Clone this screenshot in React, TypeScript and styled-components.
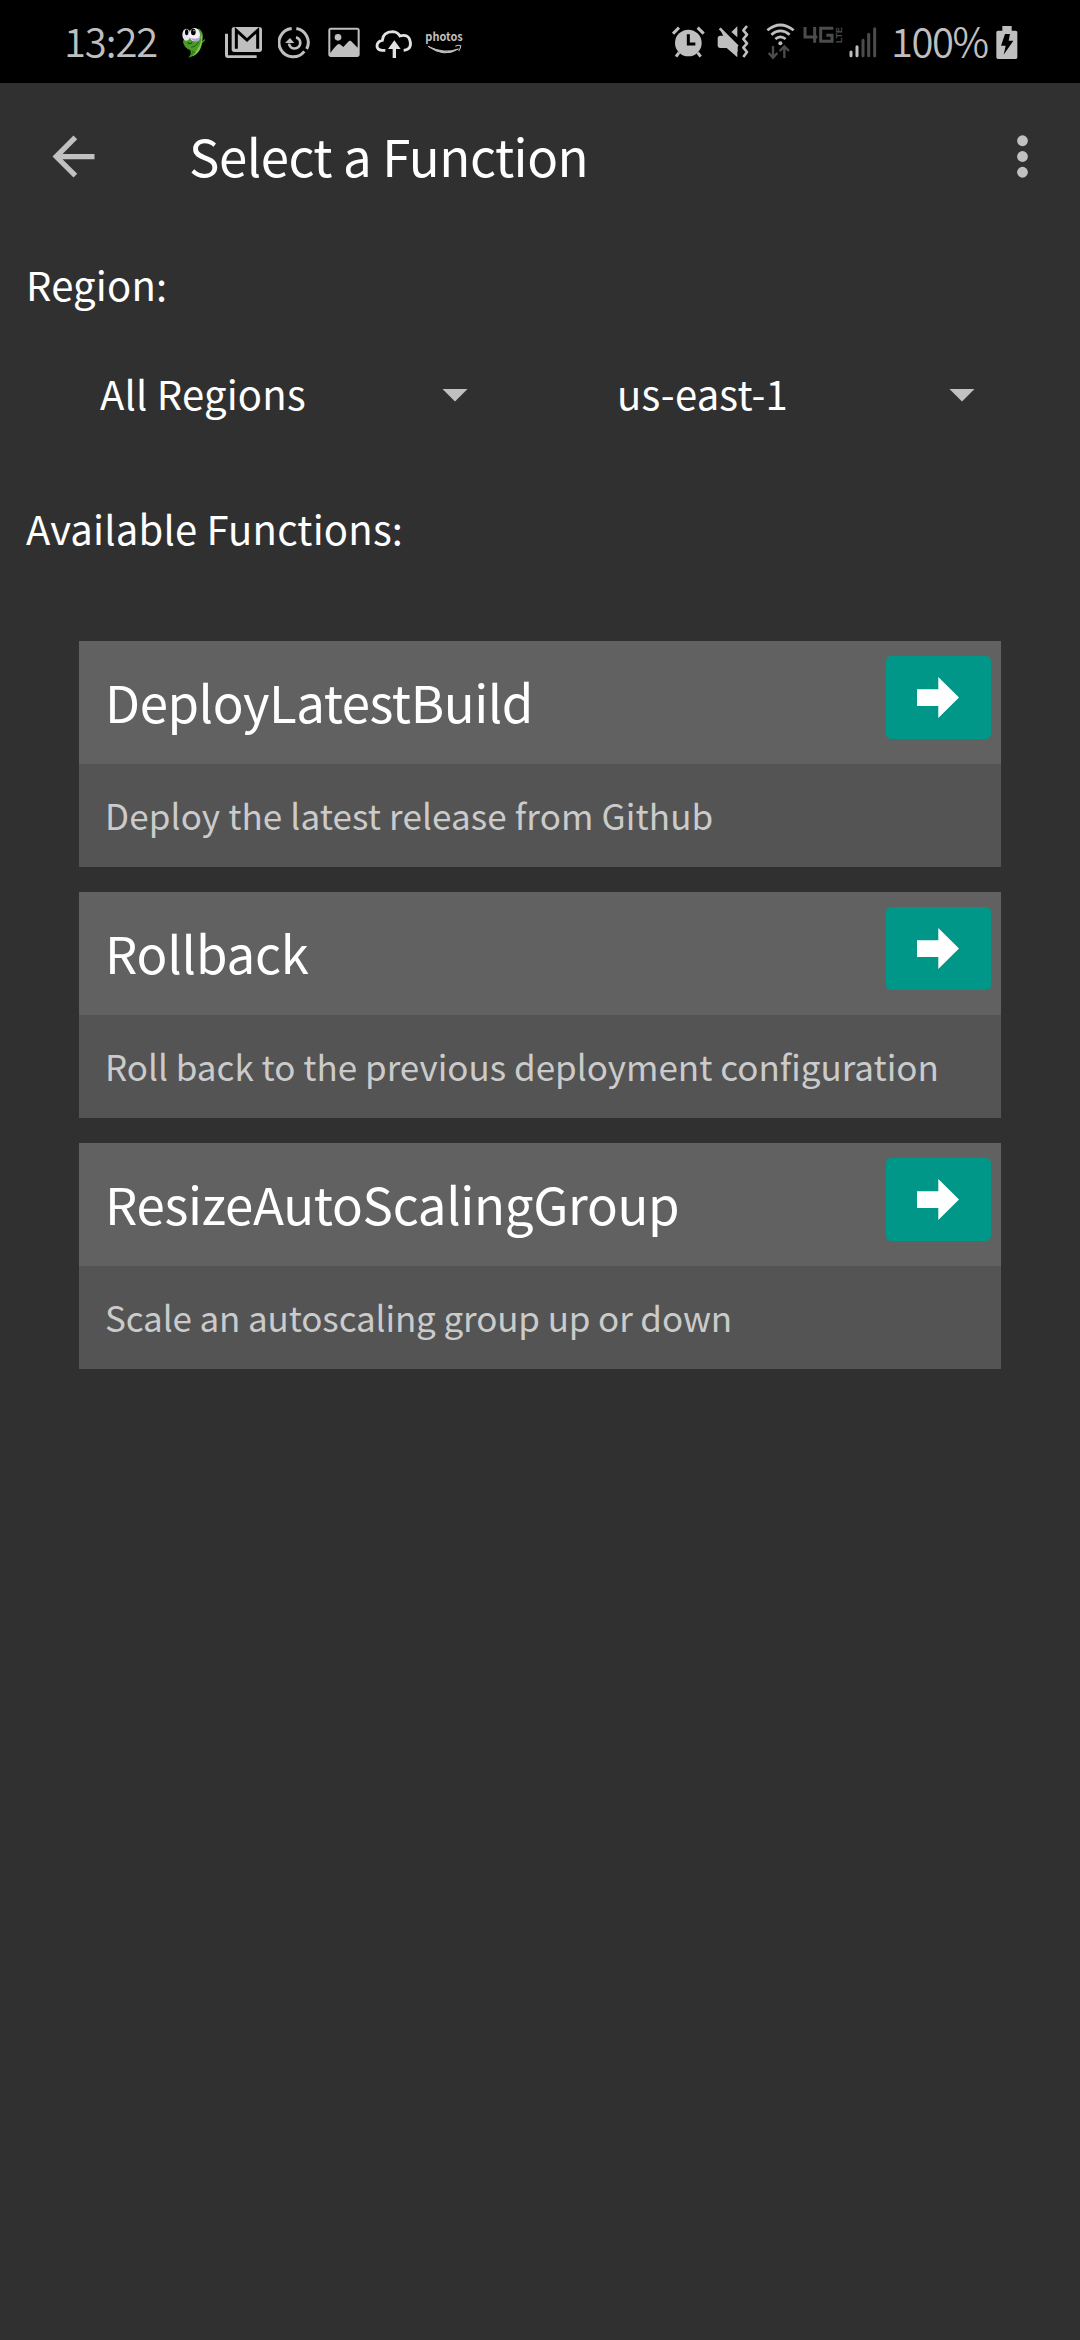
import React from "react";
import styled, { createGlobalStyle } from "styled-components";

const GlobalStyle = createGlobalStyle`
  *, *::before, *::after { box-sizing: border-box; }
  html, body { margin: 0; padding: 0; background: #303030; }
  body { font-family: "Noto Sans CJK SC", "Noto Sans", sans-serif; color: #ffffff; }
`;

const Screen = styled.div`
  width: 1080px;
  height: 2340px;
  display: flex;
  flex-direction: column;
  background: #303030;
  overflow: hidden;
`;

const StatusBar = styled.header`
  height: 83px;
  flex: none;
  display: flex;
  justify-content: space-between;
  padding: 10px 62px 0 64px;
  background: #000000;
  color: #bfbfbf;
`;

const StatusGroup = styled.div`
  display: flex;
  height: 70px;
`;

const StatusText = styled.span<{ $width: number; $inset: number; $spacing: number }>`
  width: ${(p) => p.$width}px;
  padding-left: ${(p) => p.$inset}px;
  flex: none;
  font-size: 40px;
  font-weight: 350;
  line-height: 61px;
  letter-spacing: ${(p) => p.$spacing}px;
  white-space: nowrap;
`;

const Glyph = styled.svg<{ $gap: number }>`
  display: block;
  flex: none;
  height: 70px;
  margin-left: ${(p) => p.$gap}px;
`;

const Toolbar = styled.nav`
  height: 147px;
  flex: none;
  display: flex;
  align-items: center;
  padding: 0 26px 0 42px;
`;

const IconButton = styled.button`
  width: 63px;
  height: 63px;
  padding: 0;
  border: 0;
  background: none;
  color: #c1c1c1;
  svg { display: block; width: 63px; height: 63px; fill: currentColor; }
`;

const Label = styled.span`
  display: block;
  padding-bottom: 4px;
  font-size: 40px;
  letter-spacing: 0.2px;
  line-height: 56px;
  white-space: nowrap;
`;

const Title = styled.h1`
  flex: 1;
  margin: 0 0 0 84px;
  padding-bottom: 4px;
  font-size: 51px;
  font-weight: 400;
  line-height: 70px;
  letter-spacing: -0.5px;
  white-space: nowrap;
`;

const SectionLabel = styled.div<{ $top: number }>`
  margin-top: ${(p) => p.$top}px;
  padding-left: 26px;
`;

const SpinnerRow = styled.div`
  display: flex;
  margin-top: 49px;
  padding-left: 100px;
`;

const Spinner = styled.div<{ $width: number; $next: number }>`
  width: ${(p) => p.$width}px;
  margin-right: ${(p) => p.$next}px;
  display: flex;
  align-items: center;
  justify-content: space-between;
`;

const Caret = styled.i`
  width: 26px;
  height: 13px;
  background: #c1c1c1;
  clip-path: polygon(0 0, 100% 0, 50% 100%);
`;

const List = styled.main`
  display: flex;
  flex-direction: column;
  gap: 25px;
  margin: 81px 79px 0;
`;

const Card = styled.section`
  background: #545454;
`;

const CardHeader = styled.div`
  height: 123px;
  display: flex;
  justify-content: space-between;
  align-items: flex-start;
  padding: 15px 10px 0 26px;
  background: #616161;
`;

const CardTitle = styled.h2<{ $spacing: number }>`
  margin: 10px 0 0;
  font-size: 51px;
  font-weight: 400;
  line-height: 70px;
  letter-spacing: ${(p) => p.$spacing}px;
  white-space: nowrap;
`;

const RunButton = styled.button`
  width: 105px;
  height: 83px;
  padding: 0;
  border: 0;
  border-radius: 5px;
  background: #009688;
  svg { display: block; }
`;

const CardText = styled.p<{ $spacing: number }>`
  height: 103px;
  margin: 0;
  padding: 21px 0 0 26px;
  color: #cbcbcb;
  font-size: 35px;
  line-height: 60px;
  letter-spacing: ${(p) => p.$spacing}px;
  white-space: nowrap;
`;

const functions = [
  { name: "DeployLatestBuild", nameSpacing: -0.45, text: "Deploy the latest release from Github", textSpacing: 0.13 },
  { name: "Rollback", nameSpacing: -0.2, text: "Roll back to the previous deployment configuration", textSpacing: 0 },
  { name: "ResizeAutoScalingGroup", nameSpacing: -0.33, text: "Scale an autoscaling group up or down", textSpacing: -0.12 },
];

const grey = "#bfbfbf";
const dim = "#4c4c4c";

const Worm = () => (
  <Glyph $gap={0} width={28} viewBox="390 0 84 210">
    <path d="M447 56C460 66 461 78 456 94L466 86L464 92L456 100C452 124 440 138 415 143Q426 132 421 121Q400 112 399 94L420 60Z" fill="#4b9a28" />
    <path d="M450 66Q460 92 442 118Q434 134 424 139Q448 132 454 106Q461 82 450 66Z" fill="#83c94b" />
    <path d="M424 112Q436 112 446 96M426 124l8 4M421 134l8-3" stroke="#22610f" strokeWidth="3" fill="none" />
    <ellipse cx="409" cy="74" rx="12" ry="18" fill="#e9e4f4" />
    <ellipse cx="434" cy="74" rx="16" ry="20" fill="#f4f0fb" />
    <path d="M422 84q6 12 20 10q10-4 10-16q-8 12-30 6Z" fill="#b5a6d2" />
    <ellipse cx="410" cy="67" rx="5" ry="9" fill="#000" />
    <ellipse cx="430" cy="66" rx="7" ry="10" fill="#000" />
    <circle cx="432" cy="62" r="2" fill="#fff" />
    <path d="M412 98q8 7 15-1" stroke="#123c08" strokeWidth="3" fill="none" />
  </Glyph>
);

const Mail = () => (
  <Glyph $gap={17} width={38} viewBox="525 0 114 210">
    <path d="M525 71h9v65h86v8h-86q-9 0-9-9Z" fill={grey} />
    <rect x="545" y="51" width="91" height="75" rx="8" fill={grey} />
    <path d="M559 116V61L591 90L623 61V116" stroke="#000" strokeWidth="9" fill="none" />
  </Glyph>
);

const Sync = () => (
  <Glyph $gap={15} width={33} viewBox="54 0 99 210">
    <path d="M95 55.500A42.500 42.500 0 1 0 133 124" stroke={grey} strokeWidth="9" fill="none" />
    <path d="M109 55.500A42.500 42.500 0 0 1 140 117" stroke={grey} strokeWidth="9" fill="none" />
    <path d="M108 82A17 17 0 1 1 87 101" stroke={grey} strokeWidth="8" fill="none" />
    <path d="M75 99L90 84L103 99Z" fill={grey} />
  </Glyph>
);

const Picture = () => (
  <Glyph $gap={17} width={32} viewBox="204 0 96 210">
    <path
      d="M213 53H291Q299 53 299 61V133Q299 141 291 141H213Q205 141 205 133V61Q205 53 213 53ZM211 59V129L217 121Q222 114 228 108Q235 99 242 104L250 111L264 96Q270 89 276 96L293 113V59Z"
      fill={grey}
      fillRule="evenodd"
    />
    <circle cx="234" cy="82" r="10" fill={grey} />
  </Glyph>
);

const CloudUpload = () => (
  <Glyph $gap={15} width={38} viewBox="344 0 114 210">
    <path d="M375 121H365Q350 119 350 107Q351 94 366 91Q368 66 397 65Q412 66 419 78Q444 71 449 92Q456 118 430 121" stroke="#e2e2e2" strokeWidth="8.500" fill="none" />
    <path d="M402 91L421 117H407V144H397V117H383Z" fill="#e2e2e2" />
  </Glyph>
);

const Photos = () => (
  <Glyph $gap={12} width={39} viewBox="494 0 117 210">
    <text x="495" y="94" fontFamily="Noto Sans CJK SC, sans-serif" fontWeight="700" fontSize="35" textLength="112" lengthAdjust="spacingAndGlyphs" fill="#bfbfbf">
      photos
    </text>
    <path d="M503 109Q552 144 594 117Q552 133 503 109Z" fill="#bfbfbf" stroke="#bfbfbf" strokeWidth="3" strokeLinejoin="round" />
    <path d="M585 109Q595 104 601 107Q602 114 595 123" fill="none" stroke="#bfbfbf" strokeWidth="3.500" />
  </Glyph>
);

const Alarm = () => (
  <Glyph $gap={0} width={33} viewBox="65 0 99 210">
    <circle cx="114" cy="99" r="40" fill={grey} />
    <path d="M68 71L86 53M142 53L160 71M86 128L77 140M142 128L151 140" stroke={grey} strokeWidth="9" fill="none" />
    <path d="M114 73V102H135" stroke="#000" strokeWidth="9" fill="none" />
  </Glyph>
);

const Mute = () => (
  <Glyph $gap={12} width={34} viewBox="200 0 102 210">
    <path d="M209 77H219L261 121V142L229 114H209Q202 113 202 107V84Q202 78 209 77ZM261 49V82L243 66Z" fill={grey} />
    <path d="M208 55L262 109V125L222 85Z" fill={grey} />
    <path d="M208 55L262 109" stroke={grey} strokeWidth="8" />
    <path d="M290 48L279 61L290 74L279 87L290 100L279 113L290 126L279 141" stroke={grey} strokeWidth="8" fill="none" strokeLinejoin="round" />
  </Glyph>
);

const Wifi = () => (
  <Glyph $gap={15} width={30} viewBox="347 0 90 210">
    <path d="M351 61Q390 29 430 61M363 74Q390 51 418 74M375 87Q390 74 406 87" stroke={grey} strokeWidth="8" fill="none" />
    <circle cx="390" cy="100" r="6" fill={grey} />
    <path d="M368 108V143M355 129L368 143L381 129M402 144V109M388 123L402 109L416 123" stroke={dim} strokeWidth="7" fill="none" />
  </Glyph>
);

const Network = () => (
  <Glyph $gap={7} width={40} viewBox="458 0 120 210">
    <path d="M464 51V81H501M493 51V98M549 55H511V94H545V76H528" stroke={dim} strokeWidth="9" fill="none" />
    <text transform="translate(575 99) rotate(-90)" fontFamily="Liberation Sans, sans-serif" fontWeight="700" fontSize="27" textLength="48" lengthAdjust="spacingAndGlyphs" fill={dim}>
      LTE
    </text>
  </Glyph>
);

const Signal = () => (
  <Glyph $gap={6} width={28} viewBox="26 0 84 210">
    <path d="M32 126V137M50 110V137" stroke={grey} strokeWidth="9" strokeLinecap="round" />
    <path d="M68 91V137M85 73V137M103 56V137" stroke={dim} strokeWidth="9" strokeLinecap="round" />
  </Glyph>
);

const Battery = () => (
  <Glyph $gap={4} width={22} viewBox="467 0 66 210">
    <path d="M486 48H514V62H526Q531 62 531 67V142Q531 147 526 147H473Q468 147 468 142V67Q468 62 473 62H486Z" fill={grey} />
    <path d="M494 72H509L505 92H519L490 134L496 107H482Z" fill="#000" />
  </Glyph>
);

export default function App() {
  return (
    <Screen>
      <GlobalStyle />
      <StatusBar>
        <StatusGroup>
          <StatusText $width={116} $inset={0} $spacing={-1.1}>13:22</StatusText>
          <Worm />
          <Mail />
          <Sync />
          <Picture />
          <CloudUpload />
          <Photos />
        </StatusGroup>
        <StatusGroup>
          <Alarm />
          <Mute />
          <Wifi />
          <Network />
          <Signal />
          <StatusText $width={115} $inset={14} $spacing={-1.5}>100%</StatusText>
          <Battery />
        </StatusGroup>
      </StatusBar>

      <Toolbar>
        <IconButton aria-label="Back">
          <svg viewBox="0 0 24 24"><path d="M20 11H7.830l5.590-5.590L12 4l-8 8 8 8 1.410-1.410L7.830 13H20v-2z" /></svg>
        </IconButton>
        <Title>Select a Function</Title>
        <IconButton aria-label="More options">
          <svg viewBox="0 0 24 24"><circle cx="12" cy="6" r="2.050" /><circle cx="12" cy="12" r="2.050" /><circle cx="12" cy="18" r="2.050" /></svg>
        </IconButton>
      </Toolbar>

      <SectionLabel $top={26}><Label>Region:</Label></SectionLabel>
      <SpinnerRow>
        <Spinner $width={368} $next={149}>
          <Label>All Regions</Label>
          <Caret />
        </Spinner>
        <Spinner $width={358} $next={0}>
          <Label>us-east-1</Label>
          <Caret />
        </Spinner>
      </SpinnerRow>
      <SectionLabel $top={75}><Label>Available Functions:</Label></SectionLabel>

      <List>
        {functions.map((f) => (
          <Card key={f.name}>
            <CardHeader>
              <CardTitle $spacing={f.nameSpacing}>{f.name}</CardTitle>
              <RunButton aria-label={`Run ${f.name}`}>
                <svg width="105" height="83" viewBox="0 0 105 83">
                  <path d="M31 33.300H52.300V21L73 41.600L52.300 62V50H31Z" fill="#fff" />
                </svg>
              </RunButton>
            </CardHeader>
            <CardText $spacing={f.textSpacing}>{f.text}</CardText>
          </Card>
        ))}
      </List>
    </Screen>
  );
}
